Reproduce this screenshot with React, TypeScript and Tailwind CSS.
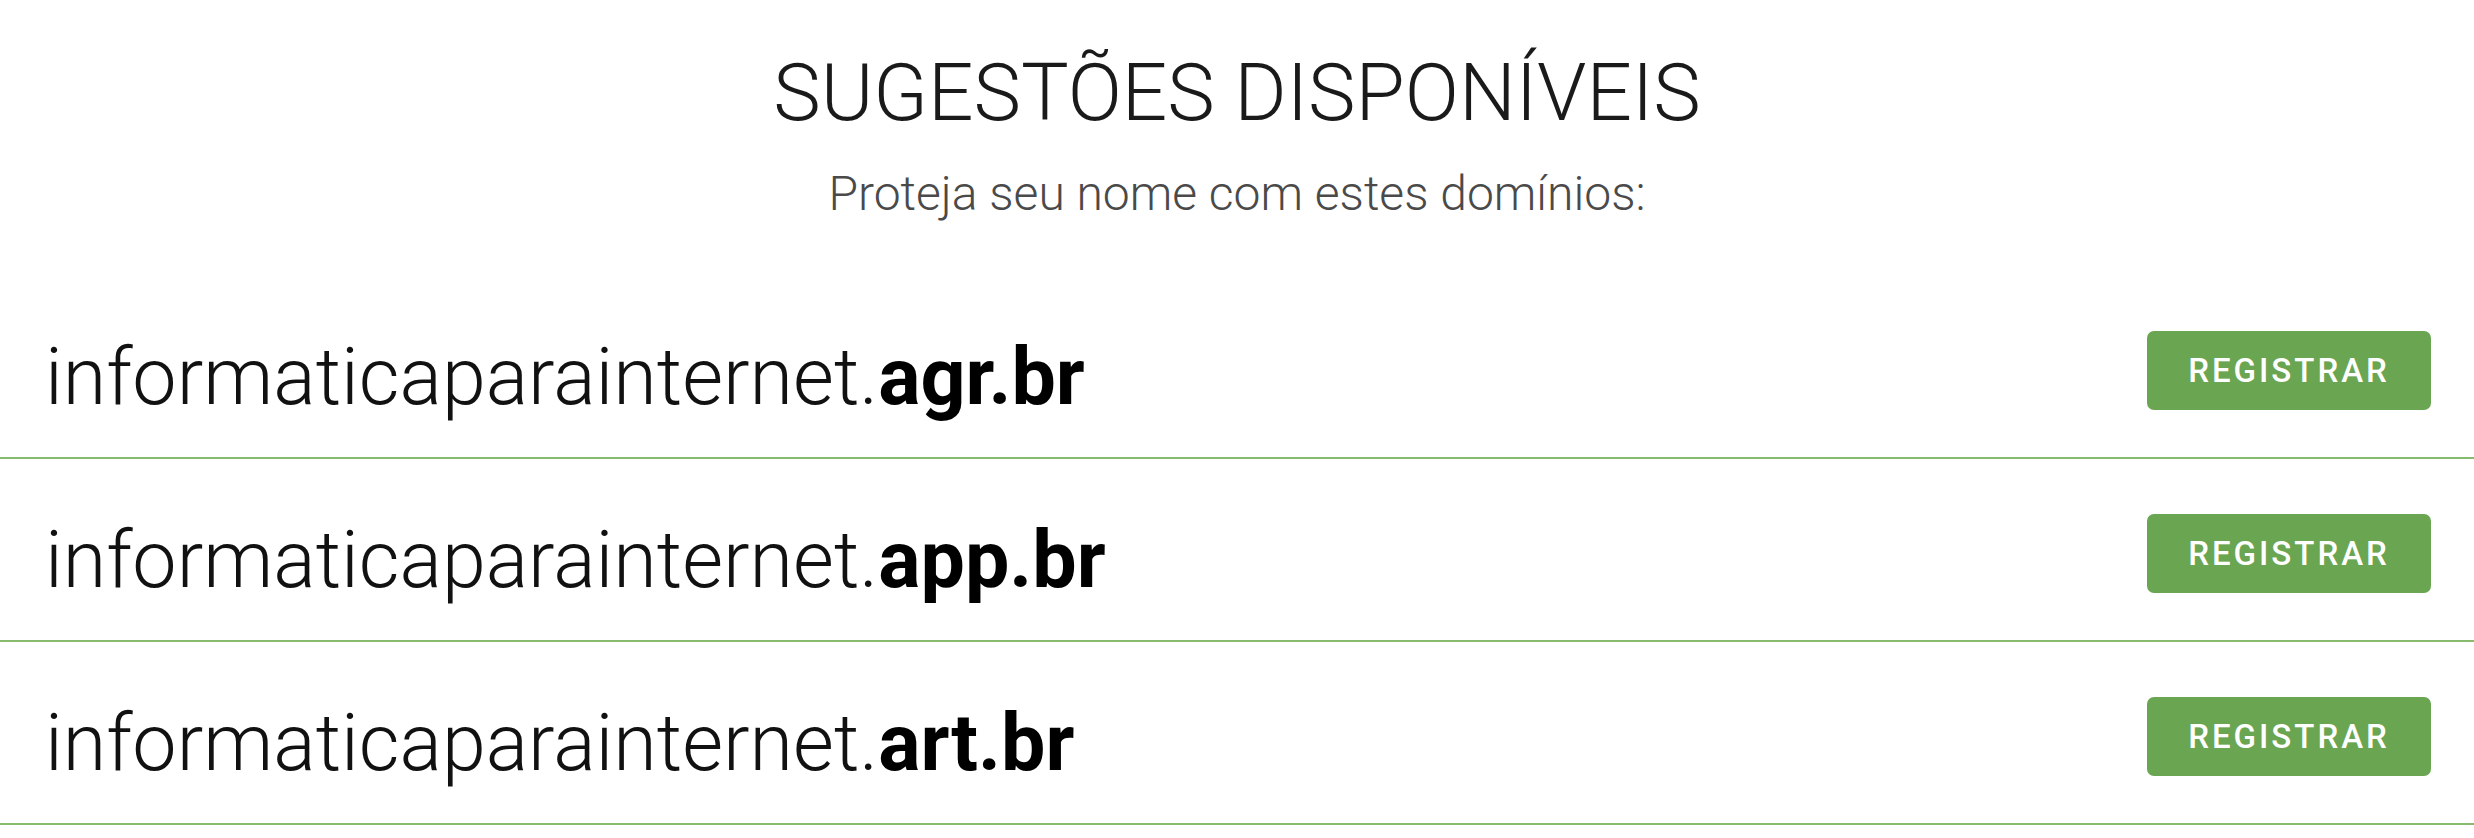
import React from "react";

const domains = ["agr.br", "app.br", "art.br"];

export default function App() {
  return (
    <div className="w-full min-h-[838px] bg-white" style={{ fontFamily: "Roboto, 'Open Sans', sans-serif" }}>
      <div className="flex flex-col items-center pt-[53px]">
        <h1 className="text-[80px] font-light leading-none text-[#1a1a1a]">SUGESTÕES DISPONÍVEIS</h1>
        <p className="mt-[37px] text-[48px] font-light leading-none text-[#4a4a4a]">Proteja seu nome com estes domínios:</p>
      </div>
      <div className="mt-[58px] flex flex-col">
        {domains.map((d) => (
          <div
            key={d}
            className="flex h-[183px] items-center justify-between border-b-2 border-[#86bb6e] pt-[8px] pl-[45px] pr-[43px]"
          >
            <div className="mt-[14px] text-[79px] font-light leading-none text-[#111]">
              informaticaparainternet.<span className="font-bold text-black">{d}</span>
            </div>
            <button className="flex h-[79px] w-[284px] items-center justify-center rounded-[7px] bg-[#6aa552] text-[33px] font-medium tracking-[3px] text-white">
              REGISTRAR
            </button>
          </div>
        ))}
      </div>
    </div>
  );
}
